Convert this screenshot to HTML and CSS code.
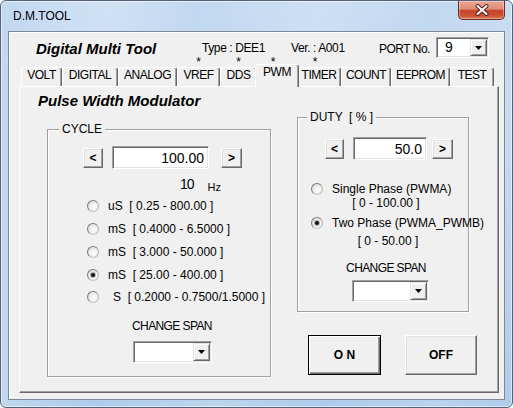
FILE: index.html
```html
<!DOCTYPE html>
<html>
<head>
<meta charset="utf-8">
<title>D.M.TOOL</title>
<link rel="stylesheet" href="styles.css">
</head>
<body>
<div class="window">
  <div class="titlebar">
    <span class="title">D.M.TOOL</span>
    <div class="close">
      <svg width="14" height="12" viewBox="0 0 14 12">
        <path d="M2.5 2 L11.5 10 M11.5 2 L2.5 10" stroke="#4a1a10" stroke-width="3.8" stroke-linecap="round" fill="none"/>
        <path d="M2.5 2 L11.5 10 M11.5 2 L2.5 10" stroke="#ffffff" stroke-width="2" stroke-linecap="round" fill="none"/>
      </svg>
    </div>
  </div>
  <div class="client">
    <div class="header">
      <span class="app-name">Digital Multi Tool</span>
      <span class="info type">Type : DEE1</span>
      <span class="info ver">Ver. : A001</span>
      <span class="port">PORT No.</span>
      <div class="combo port-combo">
        <span class="combo-val">9</span>
        <span class="combo-btn"><svg width="7" height="4" viewBox="0 0 7 4"><polygon points="0,0 7,0 3.5,4" fill="#000"/></svg></span>
      </div>
    </div>
    <div class="tabs">
      <div class="tabcol t-volt"><span class="star"></span><span class="tab">VOLT</span></div>
      <div class="tabcol t-digital"><span class="star"></span><span class="tab">DIGITAL</span></div>
      <div class="tabcol t-analog"><span class="star"></span><span class="tab">ANALOG</span></div>
      <div class="tabcol t-vref"><span class="star">*</span><span class="tab">VREF</span></div>
      <div class="tabcol t-dds"><span class="star">*</span><span class="tab">DDS</span></div>
      <div class="tabcol t-pwm"><span class="star shift">*</span><span class="tab sel">PWM</span></div>
      <div class="tabcol t-timer"><span class="star shift">*</span><span class="tab">TIMER</span></div>
      <div class="tabcol t-count"><span class="star"></span><span class="tab">COUNT</span></div>
      <div class="tabcol t-eeprom"><span class="star"></span><span class="tab">EEPROM</span></div>
      <div class="tabcol t-test"><span class="star"></span><span class="tab">TEST</span></div>
    </div>
    <div class="panel">
      <div class="panel-title">Pulse Width Modulator</div>
      <div class="panel-body">
        <fieldset class="group cycle">
          <legend class="legend-cycle">CYCLE</legend>
          <div class="stepper">
            <div class="btn-step c-prev">&lt;</div>
            <div class="num c-num">100.00</div>
            <div class="btn-step c-next">&gt;</div>
          </div>
          <div class="hz">
            <span class="hz-val">10</span>
            <span class="hz-unit">Hz</span>
          </div>
          <div class="radios">
            <div class="radio-row"><span class="radio"></span><span class="radio-label">uS  [ 0.25 - 800.00 ]</span></div>
            <div class="radio-row"><span class="radio"></span><span class="radio-label">mS  [ 0.4000 - 6.5000 ]</span></div>
            <div class="radio-row"><span class="radio"></span><span class="radio-label">mS  [ 3.000 - 50.000 ]</span></div>
            <div class="radio-row"><span class="radio checked"></span><span class="radio-label">mS  [ 25.00 - 400.00 ]</span></div>
            <div class="radio-row"><span class="radio"></span><span class="radio-label wide">S  [ 0.2000 - 0.7500/1.5000 ]</span></div>
          </div>
          <div class="span-label c-span">CHANGE SPAN</div>
          <div class="combo c-combo">
            <span class="combo-val"></span>
            <span class="combo-btn"><svg width="7" height="4" viewBox="0 0 7 4"><polygon points="0,0 7,0 3.5,4" fill="#000"/></svg></span>
          </div>
        </fieldset>
        <div class="right-col">
          <fieldset class="group duty">
            <legend class="legend-duty">DUTY  [ % ]</legend>
            <div class="stepper d-stepper">
              <div class="btn-step d-prev">&lt;</div>
              <div class="num d-num">50.0</div>
              <div class="btn-step d-next">&gt;</div>
            </div>
            <div class="opt single"><span class="radio"></span><span class="radio-label">Single Phase (PWMA)</span></div>
            <div class="range">[ 0 - 100.00 ]</div>
            <div class="opt two"><span class="radio checked"></span><span class="radio-label">Two Phase (PWMA_PWMB)</span></div>
            <div class="range r-two">[ 0 - 50.00 ]</div>
            <div class="span-label range d-span">CHANGE SPAN</div>
            <div class="combo d-combo">
              <span class="combo-val"></span>
              <span class="combo-btn"><svg width="7" height="4" viewBox="0 0 7 4"><polygon points="0,0 7,0 3.5,4" fill="#000"/></svg></span>
            </div>
          </fieldset>
          <div class="actions">
            <div class="btn btn-on">O N</div>
            <div class="btn btn-off">OFF</div>
          </div>
        </div>
      </div>
    </div>
  </div>
</div>
</body>
</html>
```

FILE: styles.css
```css
* { box-sizing: border-box; }
html, body { margin: 0; padding: 0; }
body {
  width: 513px;
  height: 408px;
  overflow: hidden;
  background: #ffffff;
  font-family: "Liberation Sans", Arial, sans-serif;
  font-size: 12px;
  color: #000;
}

.window {
  width: 513px;
  height: 408px;
  border: 1px solid #53637a;
  border-radius: 6px;
  padding: 0 7px 7px 7px;
  display: flex;
  flex-direction: column;
  background:
    linear-gradient(105deg, rgba(255,255,255,0) 0%, rgba(255,255,255,0.22) 18%, rgba(255,255,255,0) 32%, rgba(255,255,255,0.18) 52%, rgba(255,255,255,0) 70%, rgba(255,255,255,0.15) 88%, rgba(255,255,255,0) 100%),
    linear-gradient(#c3d9f1, #b6d0ec 60%, #aecbea);
  box-shadow: inset 0 0 0 1px rgba(255,255,255,0.55);
}

.titlebar {
  height: 30px;
  display: flex;
  align-items: flex-start;
  flex: none;
}
.title {
  margin: 8px 0 0 5px;
  line-height: 14px;
  font-size: 12px;
}
.close {
  margin-left: auto;
  width: 47px;
  height: 19px;
  border: 1px solid #6e2a1c;
  border-top: none;
  border-radius: 0 0 5px 5px;
  background: linear-gradient(#eaa898 0%, #de8c77 45%, #c8442a 52%, #cc5135 80%, #d9795c 100%);
  box-shadow: inset 0 0 0 1px rgba(255,255,255,0.35);
  display: flex;
  align-items: center;
  justify-content: center;
}

.client {
  height: 369px;
  flex: none;
  background: #f0f0f0;
  border: 1px solid #7d8896;
  box-shadow: inset 1px 1px 0 #ffffff;
}

/* header */
.header {
  height: 24px;
  display: flex;
  align-items: flex-start;
  padding-left: 27px;
}
.app-name {
  width: 166px;
  margin-top: 8px;
  font-size: 15px;
  line-height: 18px;
  font-weight: bold;
  font-style: italic;
  white-space: nowrap;
}
.info {
  margin-top: 9px;
  line-height: 14px;
  letter-spacing: -0.4px;
  white-space: pre;
}
.type { width: 89px; }
.ver { width: 88px; }
.port {
  width: 57px;
  margin-top: 10px;
  line-height: 14px;
  letter-spacing: -0.5px;
}

/* combos */
.combo {
  display: flex;
  background: #fff;
  border: 1px solid;
  border-color: #a0a0a0 #ffffff #ffffff #a0a0a0;
  box-shadow: inset 1px 1px 0 #696969, inset -1px -1px 0 #e3e3e3;
  padding: 1px;
}
.combo-val {
  flex: 1;
  font-size: 14px;
  line-height: 17px;
  padding-left: 7px;
}
.combo-btn {
  width: 17px;
  flex: none;
  background: #f0f0f0;
  border: 1px solid;
  border-color: #e3e3e3 #696969 #696969 #e3e3e3;
  box-shadow: inset 1px 1px 0 #ffffff, inset -1px -1px 0 #a0a0a0;
  display: flex;
  align-items: center;
  justify-content: center;
}
.port-combo {
  width: 53px;
  height: 21px;
  margin-top: 5px;
}

/* tabs */
.tabs {
  height: 30px;
  display: flex;
  align-items: flex-start;
  padding-left: 12px;
}
.tabcol {
  display: flex;
  flex-direction: column;
}
.star {
  height: 8px;
  padding-top: 4.5px;
  line-height: 3.5px;
  font-size: 12px;
  text-align: center;
  overflow: visible;
}
.star.shift { padding-right: 8px; }
.tab {
  height: 19px;
  margin-top: 3px;
  border-top: 1px solid #fff;
  border-left: 1px solid #fff;
  border-right: 1px solid #696969;
  border-radius: 3px 3px 0 0;
  box-shadow: inset -1px 0 0 #a0a0a0;
  text-align: center;
  line-height: 14px;
  letter-spacing: -0.5px;
  white-space: nowrap;
}
.tab.sel {
  height: 23px;
  margin: 0 -2px;
  position: relative;
  z-index: 1;
  background: #f0f0f0;
}
.t-volt { width: 41px; }
.t-digital { width: 56px; }
.t-analog { width: 59px; }
.t-vref { width: 43px; }
.t-dds { width: 37px; }
.t-pwm { width: 40px; }
.t-timer { width: 44px; }
.t-count { width: 50px; }
.t-eeprom { width: 59px; }
.t-test { width: 44px; }

/* panel */
.panel {
  margin-left: 10px;
  width: 480px;
  height: 307px;
  border: 1px solid;
  border-color: #ffffff #696969 #696969 #ffffff;
  box-shadow: inset -1px -1px 0 #a0a0a0;
}
.panel-title {
  margin: 5px 0 0 18px;
  font-size: 15px;
  line-height: 18px;
  font-weight: bold;
  font-style: italic;
}
.panel-body {
  display: flex;
  align-items: flex-start;
}

.group {
  margin: 0;
  padding: 0;
  min-width: 0;
  border: 1px solid #a0a0a0;
  box-shadow: inset 1px 1px 0 #ffffff, 1px 1px 0 #ffffff;
}
.group legend {
  padding: 0 3px;
  line-height: 14px;
  background: #f0f0f0;
  white-space: pre;
}
.legend-cycle { margin-left: 11px; }
.legend-duty { margin-left: 9px; }

.cycle {
  width: 224px;
  margin: 12px 0 0 27px;
  padding-bottom: 13px;
}

.stepper {
  display: flex;
  align-items: center;
  height: 23px;
  margin-top: 10px;
}
.btn-step {
  height: 20px;
  background: #f0f0f0;
  border: 1px solid;
  border-color: #ffffff #696969 #696969 #ffffff;
  box-shadow: inset -1px -1px 0 #a0a0a0, inset 1px 1px 0 #e3e3e3;
  display: flex;
  align-items: center;
  justify-content: center;
  font-weight: bold;
  font-size: 12px;
}
.num {
  height: 23px;
  background: #fff;
  border: 1px solid;
  border-color: #a0a0a0 #ffffff #ffffff #a0a0a0;
  box-shadow: inset 1px 1px 0 #696969, inset -1px -1px 0 #e3e3e3;
  display: flex;
  align-items: center;
  justify-content: flex-end;
  padding-right: 4px;
  font-size: 14px;
}
.c-prev { width: 20px; margin-left: 35px; }
.c-num { width: 97px; margin-left: 9px; }
.c-next { width: 21px; margin-left: 12px; }

.hz {
  display: flex;
  align-items: flex-start;
  height: 16px;
  margin-top: 7px;
  padding-left: 132px;
}
.hz-val {
  font-size: 14px;
  line-height: 16px;
  letter-spacing: -1px;
}
.hz-unit {
  font-size: 11px;
  line-height: 16px;
  margin: 3px 0 0 14px;
}

.radios { margin-top: 3px; }
.radio-row {
  display: flex;
  align-items: center;
  height: 22.75px;
  padding-left: 39px;
}
.radio {
  flex: none;
  width: 12px;
  height: 12px;
  border-radius: 50%;
  border: 1px solid;
  border-color: #7c7c7c #b4b4b4 #c6c6c6 #7c7c7c;
  background: radial-gradient(circle at 60% 60%, #ffffff 0%, #eeeeee 45%, #d2d2d2 100%);
  display: flex;
  align-items: center;
  justify-content: center;
}
.radio.checked::after {
  content: "";
  width: 4px;
  height: 4px;
  border-radius: 50%;
  background: #111;
  box-shadow: 0 0 0 1px rgba(60,60,60,0.35);
}
.radio-label {
  margin-left: 9px;
  line-height: 14px;
  white-space: pre;
}
.radio-label.wide { margin-left: 14px; }

.span-label {
  line-height: 14px;
  letter-spacing: -0.6px;
  white-space: nowrap;
}
.c-span {
  margin-top: 10px;
  padding-left: 84px;
}
.c-combo {
  width: 79px;
  height: 22px;
  margin: 8px 0 0 85px;
}

.right-col { margin-left: 26px; }
.duty {
  width: 172px;
  padding-bottom: 9px;
}
.d-stepper { margin-top: 13px; }
.d-prev { width: 19px; margin-left: 27px; }
.d-num { width: 74px; margin-left: 9px; }
.d-next { width: 21px; margin-left: 5px; }

.opt {
  display: flex;
  align-items: center;
  height: 14px;
  padding-left: 13px;
}
.opt.single { margin-top: 22px; }
.opt.two { margin-top: 6px; }
.range {
  line-height: 14px;
  text-align: center;
  padding-left: 6px;
}
.r-two { margin-top: 4px; padding-left: 10px; }
.d-span { margin-top: 13px; }
.d-combo {
  width: 77px;
  height: 22px;
  margin: 5px 0 0 54px;
}

.actions {
  display: flex;
  margin-top: 23px;
}
.btn {
  height: 40px;
  background: #f0f0f0;
  display: flex;
  align-items: center;
  justify-content: center;
  font-weight: bold;
  font-size: 12px;
  white-space: pre;
}
.btn-on {
  width: 73px;
  margin-left: 11px;
  border: 1px solid #000;
  box-shadow: inset 1px 1px 0 #ffffff, inset -1px -1px 0 #696969, inset -2px -2px 0 #a0a0a0;
}
.btn-off {
  width: 72px;
  margin-left: 24px;
  border: 1px solid;
  border-color: #ffffff #696969 #696969 #ffffff;
  box-shadow: inset -1px -1px 0 #a0a0a0, inset 1px 1px 0 #e3e3e3;
}
```
